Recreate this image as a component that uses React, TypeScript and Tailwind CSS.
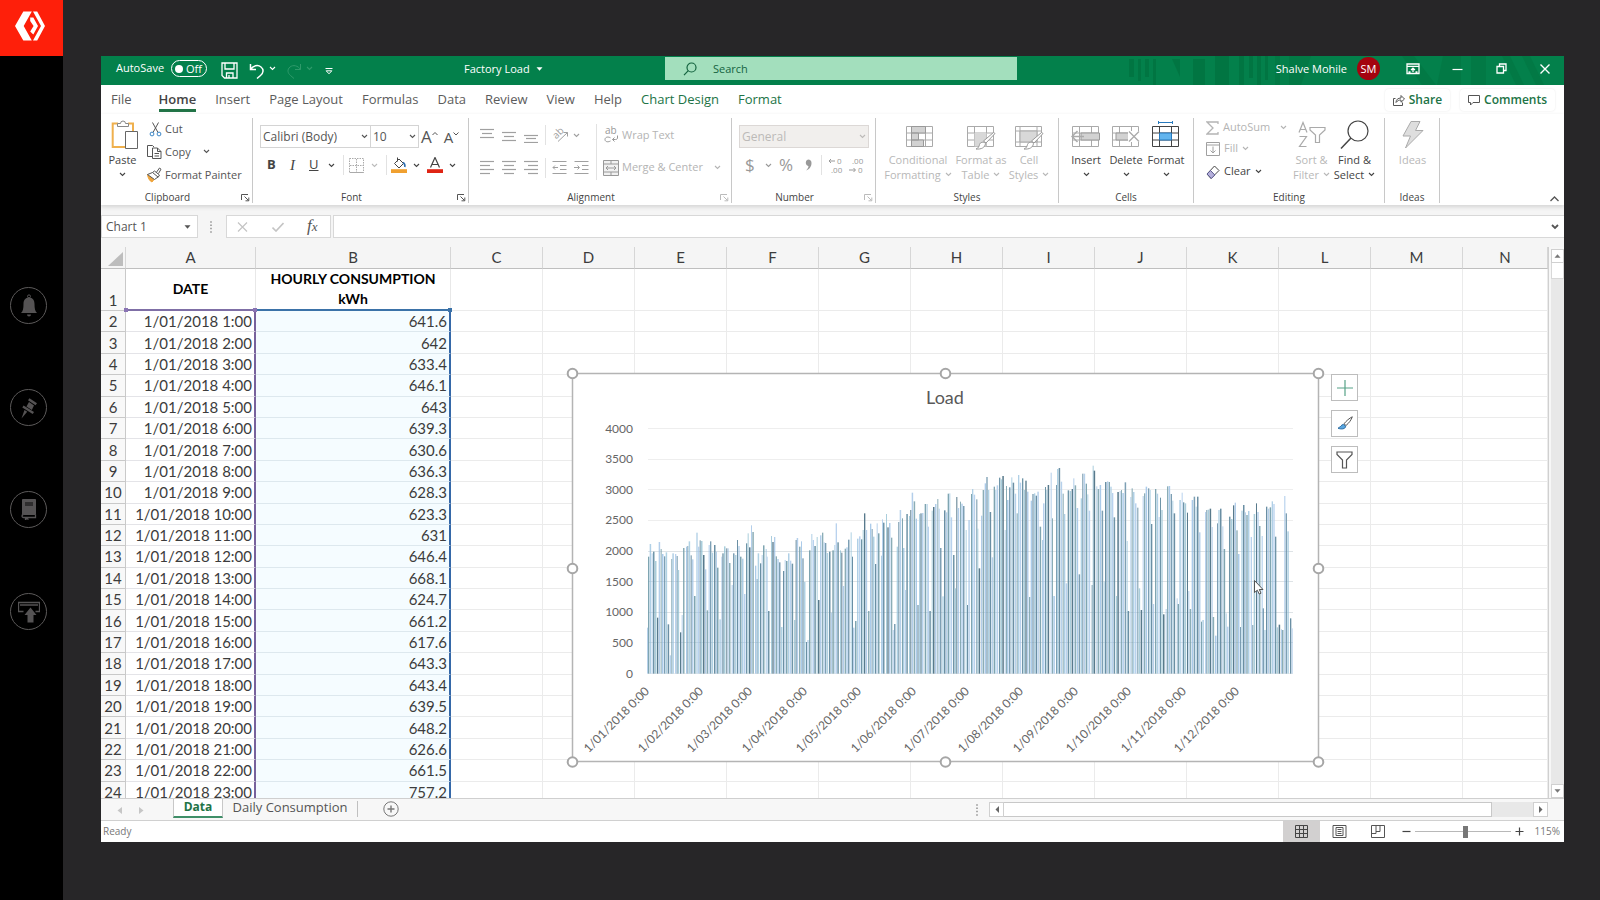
import type { ReactNode } from "react";
import clsx from "clsx";

/* ---------- small drawing helpers ---------- */

type IconProps = { w: number; h: number; children: ReactNode; className?: string };

function Icon({ w, h, children, className }: IconProps) {
  return (
    <svg
      width={w}
      height={h}
      viewBox={`0 0 ${w} ${h}`}
      fill="none"
      stroke="currentColor"
      strokeWidth="1"
      aria-hidden="true"
      className={clsx("block shrink-0", className)}
    >
      {children}
    </svg>
  );
}

function Chevron({ className }: { className?: string }) {
  return (
    <Icon w={7} h={5} className={className}>
      <path d="M1 1l2.500 2.500L6 1" strokeWidth="1.100" />
    </Icon>
  );
}

function Caret({ className }: { className?: string }) {
  return (
    <Icon w={7} h={4} className={className}>
      <path d="M0.500 0.300h6L3.500 3.700z" fill="currentColor" stroke="none" />
    </Icon>
  );
}

function Lines({ rows, className }: { rows: [number, number, number][]; className?: string }) {
  return (
    <Icon w={15} h={15} className={className}>
      {rows.map(([x, y, len]) => (
        <path key={y} d={`M${x} ${y}.5h${len}`} strokeWidth="1.200" />
      ))}
    </Icon>
  );
}

/* ---------- left rail ---------- */

function RailButton({ label, children }: { label: string; children: ReactNode }) {
  return (
    <button
      aria-label={label}
      className="flex size-[37px] items-center justify-center rounded-full border border-[#5c5a5a] text-[#555354]"
    >
      {children}
    </button>
  );
}

function Rail() {
  return (
    <nav className="flex w-[63px] shrink-0 flex-col bg-black">
      <a href="#home" aria-label="Home" className="flex h-14 items-center justify-center bg-[#fe1f0a] pr-1 pb-1 text-white">
        <Icon w={30} h={30}>
          <g fill="currentColor" stroke="none">
            <path d="M8.300 0.500h8.500L8.700 15l8.100 14.500H8.300L0 15z" />
            <path d="M18 0.500h4.200L30 15l-7.800 14.500H18L26 15z" />
            <path d="M15.200 6.500h3.100L23 15l-4.700 8.500L15.200 20.500l3.400-5.500-3.400-5z" />
          </g>
        </Icon>
      </a>
      <div className="flex flex-col gap-[65px] pt-[231px] pl-2.5">
        <RailButton label="Notifications">
          <Icon w={18} h={24}>
            <g fill="currentColor" stroke="none">
              <path d="M9 3.500c4 0 5.500 3 5.500 6.500 0 4.500.5 7 2.500 9H1c2-2 2.500-4.500 2.500-9C3.500 6.500 5 3.500 9 3.500z" />
              <path d="M7 20.500h4a2 2 0 0 1-4 0z" />
            </g>
            <circle cx="9" cy="2.400" r="1.500" />
          </Icon>
        </RailButton>
        <RailButton label="Pinned">
          <Icon w={18} h={22}>
            <g fill="currentColor" stroke="none">
              <path d="M9.500 1.200l7.500 5-1.500 2-7.500-5z" />
              <path d="M9 5l5 3.500-2.200 4.500-5.300-3.500z" />
              <path d="M3.500 8.500L14 15l-1.300 2L2.300 10.500z" />
              <path d="M4.500 13l2.700 1.800L1.500 21.500z" />
            </g>
          </Icon>
        </RailButton>
        <RailButton label="Library">
          <Icon w={16} h={21}>
            <path d="M1.500 0.500h13v15h-12a1 1 0 0 0-1 1z" fill="currentColor" />
            <path d="M4 4h8M4 6h8" stroke="black" strokeWidth="0.900" />
            <path d="M14.500 15.500v3h-12a1.500 1.500 0 0 1 0-3M4.500 18.500v2l1.500-1 1.500 1" strokeWidth="1.300" />
          </Icon>
        </RailButton>
        <RailButton label="Publish">
          <Icon w={22} h={22}>
            <path d="M5.500 10.500h-5v-9h21v9h-4M2 4h18" strokeWidth="1.300" />
            <path d="M12.500 6.500l6 7.500h-3v7.500h-6V14h-3z" fill="currentColor" stroke="none" />
          </Icon>
        </RailButton>
      </div>
    </nav>
  );
}

/* ---------- title bar ---------- */

function TitleBar() {
  return (
    <header className="flex h-[29px] items-center overflow-hidden bg-[#03804b] text-[11px] leading-4 text-white">
      <div className="flex w-[363px] shrink-0 items-center pb-1 pl-[15px]">
        <label htmlFor="autosave" className="w-[55px] pb-px">AutoSave</label>
        <span className="relative flex h-[17px] w-9 items-center justify-between rounded-full border border-white pr-1 pl-[3px]">
          <input id="autosave" type="checkbox" className="absolute inset-0 appearance-none" />
          <span className="size-2 rounded-full bg-white" />
          Off
        </span>
        <button aria-label="Save" className="ml-3.5 pt-1">
          <Icon w={17} h={17}>
            <path d="M1 1h15v15H3.500L1 13.500zM4 1v6h9V1M5.500 16v-5h6.500v5M8 13v3" strokeWidth="1.300" />
          </Icon>
        </button>
        <button aria-label="Undo" className="ml-[11px] pt-1">
          <Icon w={16} h={16}>
            <path d="M1.500 1v5.500H7M1.500 6.500C4 2.500 9 1.500 12 4s2.500 6-.5 8.500L8 15.500" strokeWidth="1.500" />
          </Icon>
        </button>
        <Chevron className="ml-1" />
        <button aria-label="Redo" disabled className="ml-2.5 pt-1 text-[#2f9a6b]">
          <Icon w={16} h={16}>
            <path d="M14.500 1v5.500H9M14.500 6.500C12 2.500 7 1.500 4 4s-2.500 6 .5 8.500L8 15.500" />
          </Icon>
        </button>
        <Chevron className="ml-1 text-[#2f9a6b]" />
        <button aria-label="Customize toolbar" className="ml-3 pt-1">
          <Icon w={8} h={8}>
            <path d="M0.500 1.500h7" />
            <path d="M1.200 3.800h5.600L4 6.800z" />
          </Icon>
        </button>
      </div>
      <button className="flex w-[201px] shrink-0 items-center gap-1.5 pb-1">
        Factory Load <Caret />
      </button>
      <div className="mb-1 flex h-[23px] w-[352px] shrink items-center gap-4 bg-[#a3dfbd] pl-[18px] text-[#14633f]">
        <Icon w={14} h={14}>
          <circle cx="8.500" cy="5.500" r="4.500" strokeWidth="1.200" />
          <path d="M5.300 8.700L1 13.200" strokeWidth="1.200" />
        </Icon>
        <input aria-label="Search" placeholder="Search" className="w-40 bg-transparent outline-none placeholder:text-[#14633f]" />
      </div>
      <div className="relative flex h-full flex-1 items-center justify-end pr-[13px] pb-1">
        <svg className="absolute inset-0 size-full text-[#02713f]" preserveAspectRatio="none" viewBox="0 0 547 29" fill="currentColor" aria-hidden="true">
          <path d="M112 3h5v18h-5zM121 3h3v22h-3zM128 3h4v18h-4zM136 3h3v26h-3zM155 3l8 0v18zM176 3h12v26h-12zM198 0h14v29h-14zM222 0h5v29h-5zM232 0h4v22h-4zM240 0h4v29h-4zM248 0h3v24h-3z" opacity="0.700" />
          <path d="M258 0h5v29h-5zM272 0h22l-10 29h-12zM385 0h12l22 29h-14zM426 0h18v29h-24zM454 0h15v29h-15zM485 0h8l14 29h-8zM505 0h8l14 29h-8z" opacity="0.450" />
        </svg>
        <span className="relative">Shalve Mohile</span>
        <span className="relative ml-2.5 flex size-[23px] items-center justify-center rounded-full bg-[#a4030f]">SM</span>
        <button aria-label="Ribbon display options" className="relative ml-[26px]">
          <Icon w={14} h={12}>
            <path d="M1 1h12v9.500H1zM1 3.300h12M7 9V5.500M5 7L7 5.200 9 7M2.500 9h2M9.500 9h2" strokeWidth="1.300" />
          </Icon>
        </button>
        <button aria-label="Minimize" className="relative ml-8">
          <Icon w={11} h={12}><path d="M0.500 6.500h10" strokeWidth="1.200" /></Icon>
        </button>
        <button aria-label="Restore" className="relative ml-[33px]">
          <Icon w={11} h={11}>
            <path d="M1 3.500h6.500V10H1z" strokeWidth="1.300" />
            <path d="M3.500 3V1H10v6.500H8" strokeWidth="1.300" />
          </Icon>
        </button>
        <button aria-label="Close" className="relative ml-8">
          <Icon w={12} h={12}><path d="M1.500 1.500l9 9M10.500 1.500l-9 9" strokeWidth="1.400" /></Icon>
        </button>
      </div>
    </header>
  );
}

/* ---------- ribbon tabs ---------- */

function RibbonTabs() {
  const tabs = ["File", "Home", "Insert", "Page Layout", "Formulas", "Data", "Review", "View", "Help", "Chart Design", "Format"];
  return (
    <div className="flex h-[29px] items-start bg-white text-[13px] leading-5 text-[#5c5c5c]">
      <nav className="flex flex-1 gap-[19px] pt-1 pl-2.5">
        {tabs.map((tab) => (
          <a
            key={tab}
            href="#ribbon"
            className={clsx(
              "h-[23px] whitespace-nowrap",
              tab === "File" && "mr-2",
              tab === "Home" && "border-b-[3px] border-[#217346] font-semibold text-[#444]",
              (tab === "Chart Design" || tab === "Format") && "text-[#217346]",
            )}
          >
            {tab}
          </a>
        ))}
      </nav>
      <div className="flex gap-2.5 pt-1 pr-[9px] text-[12px] text-[#217346]">
        <button className="flex h-[22px] items-center gap-1 rounded-sm px-2 font-semibold shadow-[0_0_2px_#e4e4e4]">
          <Icon w={12} h={12} className="text-[#555]">
            <path d="M2.500 4.500h-2v7h9v-3M3 8.500c0-3 2-4.500 5-4.500V1.500L11.500 5 8 8.200V6C6 6 4.500 6.500 3 8.500z" />
          </Icon>
          Share
        </button>
        <button className="flex h-[22px] items-center gap-1 rounded-sm px-2 font-semibold shadow-[0_0_2px_#e4e4e4]">
          <Icon w={12} h={11} className="text-[#555]"><path d="M0.500 0.500h11v7H5l-2.500 2.500V7.500h-2z" /></Icon>
          Comments
        </button>
      </div>
    </div>
  );
}

/* ---------- ribbon ---------- */

type GroupProps = { title: string; width: string; launcher?: "on" | "off"; children: ReactNode };

function Group({ title, width, launcher, children }: GroupProps) {
  return (
    <section className={clsx("relative flex h-[85px] shrink-0 flex-col border-r border-[#c8c8c8]", width)}>
      <div className="flex-1">{children}</div>
      <h2 className={clsx("text-center text-[10px] leading-3 text-[#444]", launcher && "pr-[18px]")}>{title}</h2>
      {launcher && (
        <button
          aria-label={`${title} settings`}
          className={clsx("absolute right-0.5 bottom-px", launcher === "on" ? "text-[#555]" : "text-[#bbb]")}
        >
          <Icon w={9} h={9}>
            <path d="M0.500 7V1.500H7M3.500 3.500l4 4M7.800 4.500v3.300H4.500" />
          </Icon>
        </button>
      )}
    </section>
  );
}

function BigButton({ icon, lines, width, tone }: { icon: ReactNode; lines: [string, string?]; width: string; tone?: "off" }) {
  return (
    <button
      className={clsx("flex shrink-0 flex-col items-center text-[11px] leading-[15px] whitespace-nowrap", width, tone ? "text-[#b8b8b8]" : "text-[#444]")}
    >
      <span className="flex h-[34px] items-center">{icon}</span>
      <span>{lines[0]}</span>
      <span className="flex h-[15px] items-center gap-1">
        {lines[1]}
        {lines[0] !== "Ideas" && <Chevron />}
      </span>
    </button>
  );
}

function SheetIcon({ children, className }: { children?: ReactNode; className?: string }) {
  return (
    <Icon w={30} h={29} className={className}>
      <path d="M1.500 5.500h26v20h-26zM1.500 12h26M1.500 19h26M8.500 5.500v20M20.500 5.500v20" />
      {children}
    </Icon>
  );
}

const brush = (
  <>
    <path d="M29 12.500L20 22l-2.500-2L27.500 11.500z" fill="white" stroke="#999" />
    <path d="M19.500 22.500c-.5 4-4 6-9.500 5.500 2.500-1 3-2.500 3.500-4.500s4-3.500 6-1z" fill="white" stroke="#999" />
  </>
);

function ClipboardGroup() {
  return (
    <Group title="Clipboard" width="w-[152px]" launcher="on">
      <div className="flex">
        <BigButton
          width="w-[43px]"
          lines={["Paste"]}
          icon={
            <Icon w={28} h={30} className="ml-1">
              <path d="M7 3.500H1.700V27H14" stroke="#efb04d" strokeWidth="2" />
              <path d="M17 3.500h5v8" stroke="#efb04d" strokeWidth="2" />
              <path d="M6.500 6.500v-3h3a2.500 2.500 0 0 1 5 0h3v3z" fill="white" stroke="#888" />
              <path d="M14.500 11.500h12v17h-12z" fill="white" stroke="#666" />
            </Icon>
          }
        />
        <div className="flex flex-col text-[11px] leading-[22px] text-[#555]">
          <button className="flex h-[22px] items-center pl-1">
            <Icon w={17} h={15}>
              <path d="M4.500 0.500l5.500 10M10.500 0.500L5 10.500" stroke="#555" />
              <circle cx="4" cy="12" r="1.900" stroke="#3c86c6" />
              <circle cx="11" cy="12" r="1.900" stroke="#3c86c6" />
            </Icon>
            Cut
          </button>
          <button className="flex h-[23px] items-center gap-0.5 pl-0.5">
            <Icon w={17} h={16}>
              <path d="M7 12.500H1.500v-11h5l1.500 1.500M6.500 4h5l3.500 3.500v7H6.500zM11.500 4v3.500H15M8.500 9.500h4.500M8.500 12h4.500" fill="none" />
            </Icon>
            <span className="w-9 text-left">Copy</span>
            <Chevron />
          </button>
          <button className="flex h-[23px] items-center gap-0.5 pl-0.5 whitespace-nowrap">
            <Icon w={17} h={16}>
              <path d="M1.500 7.500L8 12.500 6 15C3.500 14 2 11 1.500 7.500z" fill="#efa43a" stroke="#efa43a" />
              <path d="M6.500 5.500l2-1.500 5 4-1.500 2.500-5-1.500zM10.500 5.200l3-4.200 1.500 1.200-2.500 4.300" fill="white" />
              <path d="M1.500 7.500l5-2 5.500 4.500-3.500 2.500z" fill="#fff" />
            </Icon>
            Format Painter
          </button>
        </div>
      </div>
    </Group>
  );
}

function Divider({ className }: { className?: string }) {
  return <span className={clsx("w-px bg-[#e2e2e2]", className)} />;
}

function FontGroup() {
  return (
    <Group title="Font" width="w-[216px]" launcher="on">
      <div className="flex items-center pt-[7px] pl-[7px]">
        <button aria-label="Font name" className="flex h-[23px] w-[111px] items-center justify-between border border-[#d4d4d4] px-0.5 text-[12px] text-[#555]">
          Calibri (Body) <Chevron />
        </button>
        <button aria-label="Font size" className="flex h-[23px] w-12 items-center justify-between border border-l-0 border-[#d4d4d4] px-0.5 text-[12px] text-[#555]">
          10 <Chevron />
        </button>
        <button aria-label="Increase font size" className="ml-0.5 flex text-[17px] leading-5 text-[#555]">
          A<Icon w={6} h={5} className="mt-1"><path d="M0.500 4L3 1.500 5.500 4" /></Icon>
        </button>
        <button aria-label="Decrease font size" className="ml-1.5 flex text-[15px] leading-5 text-[#555]">
          A<Icon w={6} h={5} className="mt-1"><path d="M0.500 1.500L3 4l2.500-2.500" /></Icon>
        </button>
      </div>
      <div className="flex h-[34px] items-center pl-3.5 text-[13px] text-[#444]">
        <button className="w-[23px] text-left font-bold">B</button>
        <button className="w-[19px] text-left font-['Liberation_Serif',serif] text-[15px] italic">I</button>
        <button className="w-[19px] text-left underline">U</button>
        <Chevron />
        <Divider className="ml-2 h-5" />
        <button aria-label="Borders" className="ml-[5px] text-[#aaa]">
          <Icon w={15} h={15}>
            <path d="M0.500 0.500h14v14H0.500zM7.500 1v13M1 7.500h13" strokeDasharray="1.500 1" />
            <path d="M0.500 14.500h14" />
          </Icon>
        </button>
        <Chevron className="ml-[7px] text-[#bbb]" />
        <Divider className="ml-2 h-5" />
        <button aria-label="Fill color" className="ml-1">
          <Icon w={16} h={16}>
            <path d="M3.500 6.500L8 2l4.500 4.500L8 11zM6.500 0.500v4" />
            <path d="M12 5.500c1.800 1 2.200 2.500 1.800 4.500" stroke="#2f6fb0" strokeWidth="1.600" />
            <path d="M0 12.200h16V16H0z" fill="#f0a030" stroke="none" />
          </Icon>
        </button>
        <Chevron className="ml-1.5" />
        <button aria-label="Font color" className="ml-[7px]">
          <Icon w={16} h={16}>
            <path d="M3.500 10.500L8 0.500l4.500 10M5 7.500h6" strokeWidth="1.200" />
            <path d="M0 12.200h16V16H0z" fill="#df2414" stroke="none" />
          </Icon>
        </button>
        <Chevron className="ml-1.5" />
      </div>
    </Group>
  );
}

function AlignmentGroup() {
  return (
    <Group title="Alignment" width="w-[263px]" launcher="off">
      <div className="flex text-[11px] text-[#b4b4b4]">
        <div className="flex flex-col pl-[11px]">
          <div className="flex h-[34px] items-center gap-[7px] text-[#a0a0a0]">
            <Lines rows={[[0, 1, 14], [2, 5, 10], [0, 9, 14]]} />
            <Lines rows={[[0, 4, 14], [2, 8, 10], [0, 12, 14]]} />
            <Lines rows={[[0, 7, 14], [2, 10, 10], [0, 14, 14]]} />
            <Divider className="-mx-px h-5" />
            <Icon w={17} h={16}>
              <path d="M6 14.500L15.500 5.500M11.500 5.500h4v4" />
              <text x="2" y="11" transform="rotate(-45 5 9)" fontSize="10" fill="currentColor" stroke="none">ab</text>
            </Icon>
            <Chevron className="-ml-[3px]" />
          </div>
          <div className="flex h-[31px] items-center gap-[7px] text-[#a0a0a0]">
            <Lines rows={[[0, 1, 14], [0, 5, 10], [0, 9, 14], [0, 13, 10]]} />
            <Lines rows={[[0, 1, 14], [2, 5, 10], [0, 9, 14], [2, 13, 10]]} />
            <Lines rows={[[0, 1, 14], [4, 5, 10], [0, 9, 14], [4, 13, 10]]} />
            <Divider className="-mx-px h-5" />
            <Icon w={15} h={15}><path d="M0.500 1.500h14M8 5.500h6.500M8 9.500h6.500M0.500 13.500h14M6 7.500H1M3 5.500l-2 2 2 2" /></Icon>
            <Icon w={15} h={15}><path d="M0.500 1.500h14M8 5.500h6.500M8 9.500h6.500M0.500 13.500h14M0 7.500h5M3.500 5.500l2 2-2 2" /></Icon>
          </div>
        </div>
        <Divider className="mt-1.5 ml-[7px] h-14" />
        <div className="flex flex-col pl-1.5 whitespace-nowrap">
          <button className="flex h-[34px] items-center gap-[3px] pl-px">
            <Icon w={15} h={18} className="text-[#999]">
              <text x="1" y="8" fontSize="10" fill="currentColor" stroke="none">ab</text>
              <path d="M6.500 11.800c-3.500-1.800-5.500 0-5.500 1.700s2 3.300 5.500 1.500M13.500 9.500V12c0 1-1 1.500-2 1.500H8.500M10.500 11.500l-2 2 2 2" />
            </Icon>
            Wrap Text
          </button>
          <button className="flex h-[31px] items-center gap-[3px]">
            <Icon w={16} h={16} className="text-[#999]">
              <path d="M0.500 0.500h15v15H0.500zM0.500 4h15M0.500 12h15M8 0.500V4M8 12v3.500" fill="#f1f1f1" />
              <path d="M3 8h10M5 6L3 8l2 2M11 6l2 2-2 2" />
            </Icon>
            <span className="w-[89px] text-left">Merge &amp; Center</span>
            <Chevron />
          </button>
        </div>
      </div>
    </Group>
  );
}

function NumberGroup() {
  return (
    <Group title="Number" width="w-36" launcher="off">
      <div className="pt-[7px] pl-[7px]">
        <button className="flex h-[23px] w-[130px] items-center justify-between border border-[#dcd8d6] bg-[#f1efed] px-0.5 text-[12px] text-[#bcbab8]">
          General <Chevron />
        </button>
      </div>
      <div className="flex h-[34px] items-center pl-[13px] text-[17px] text-[#999]">
        <button className="w-5 text-left">$</button>
        <Chevron />
        <button className="ml-[7px] w-[25px] text-left">%</button>
        <button aria-label="Comma style">
          <Icon w={8} h={12}>
            <path d="M4 0.500a3.500 3.500 0 0 1 3.500 3.500c0 4-2.500 6.500-5.500 7.500 1.500-1.500 2.500-3 2.500-4.300A3.500 3.500 0 0 1 4 .5z" fill="currentColor" stroke="none" />
          </Icon>
        </button>
        <Divider className="ml-[9px] h-5" />
        <button aria-label="Increase decimal" className="ml-1.5">
          <Icon w={15} h={20}>
            <path d="M7 6H1M3 4L1 6l2 2" />
            <text x="9" y="9" fontSize="8" fill="currentColor" stroke="none">0</text>
            <text x="3" y="18" fontSize="8" fill="currentColor" stroke="none">.00</text>
          </Icon>
        </button>
        <button aria-label="Decrease decimal" className="ml-1.5">
          <Icon w={15} h={20}>
            <path d="M0 15h6M4.500 13l2 2-2 2" />
            <text x="3" y="9" fontSize="8" fill="currentColor" stroke="none">.00</text>
            <text x="9" y="18" fontSize="8" fill="currentColor" stroke="none">0</text>
          </Icon>
        </button>
      </div>
    </Group>
  );
}

function StylesGroup() {
  return (
    <Group title="Styles" width="w-[183px]">
      <div className="flex pl-[7px] text-[#999]">
        <BigButton tone="off" width="w-[70px]" lines={["Conditional", "Formatting"]} icon={
          <SheetIcon className="ml-1 text-[#aaa]">
            <path d="M6.500 5.500h14V12h-14zM6.500 12h7v7h-7zM6.500 19h12v6.500h-12z" fill="#d2d2d2" stroke="#999" />
          </SheetIcon>} />
        <BigButton tone="off" width="w-[56px]" lines={["Format as", "Table"]} icon={
          <SheetIcon className="text-[#aaa]">
            <path d="M8.500 12h12v13.500h-12z" fill="#d8d8d8" stroke="none" />
            {brush}
          </SheetIcon>} />
        <BigButton tone="off" width="w-[40px]" lines={["Cell", "Styles"]} icon={
          <Icon w={30} h={29} className="text-[#aaa]">
            <path d="M1.500 5.500h26v20h-26zM1.500 10h26M6 5.500v20M23 5.500v20M1.500 21h26" />
            <path d="M6 10h17v11H6z" fill="#d8d8d8" />
            {brush}
          </Icon>} />
      </div>
    </Group>
  );
}

function CellsGroup() {
  return (
    <Group title="Cells" width="w-[135px]">
      <div className="flex pl-[7px]">
        <BigButton width="w-10" lines={["Insert"]} icon={
          <SheetIcon className="text-[#aaa]">
            <path d="M10 12h18.500v7H10z" fill="#d2d2d2" stroke="#999" />
            <path d="M13 15.500H1M6.500 10L1 15.500 6.500 21" strokeWidth="1.500" />
          </SheetIcon>} />
        <BigButton width="w-10" lines={["Delete"]} icon={
          <SheetIcon className="text-[#aaa]">
            <path d="M5 12h15v7H5z" fill="#d2d2d2" stroke="#999" />
            <path d="M17 10h12v11H17z" fill="white" stroke="none" />
            <path d="M18 10.500l10 10M28 10.500l-10 10" strokeWidth="1.300" />
          </SheetIcon>} />
        <BigButton width="w-10" lines={["Format"]} icon={
          <SheetIcon className="text-[#444]">
            <path d="M8.500 12h12v7h-12z" fill="#63b5ee" stroke="#2779bd" />
            <path d="M7.500 1.500h14M7.500 0v3M21.500 0v3" stroke="#2779bd" />
          </SheetIcon>} />
      </div>
    </Group>
  );
}

function EditingGroup() {
  return (
    <Group title="Editing" width="w-[191px]">
      <div className="flex">
        <div className="flex w-24 flex-col pl-3 text-[11px] whitespace-nowrap text-[#b4b4b4]">
          <button className="flex h-[19px] items-center gap-1">
            <Icon w={13} h={14}><path d="M12 3V1H1l6 6-6 6h11v-2" strokeWidth="1.300" /></Icon>
            <span className="w-[53px] text-left">AutoSum</span>
            <Chevron />
          </button>
          <button className="flex h-[23px] items-center gap-1">
            <Icon w={14} h={14} className="text-[#a0a0a0]"><path d="M0.500 0.500h13v13H0.500zM0.500 3h13M7 4.500V11M4.500 8.500L7 11l2.500-2.500" /></Icon>
            Fill <Chevron />
          </button>
          <button className="flex h-[23px] items-center gap-1 text-[#444]">
            <Icon w={14} h={14}>
              <path d="M8.500 1l4.500 4.500-8 8-4-4.500z" />
              <path d="M4.500 5.500L8.800 10l-3.500 3.500L1 9z" fill="#b6b0dc" stroke="#5b5b8c" />
            </Icon>
            Clear <Chevron />
          </button>
        </div>
        <BigButton tone="off" width="w-[43px]" lines={["Sort &", "Filter"]} icon={
          <Icon w={28} h={28} className="text-[#aaa]">
            <path d="M1 11.500L5 1.500l4 10M2.300 8.500h5.400M1.500 15.500h7l-7 10h7" strokeWidth="1.200" />
            <path d="M12 6.500h15v2.500l-5.500 5v7.500h-4V14L12 9z" strokeWidth="1.200" />
          </Icon>} />
        <BigButton width="w-[43px]" lines={["Find &", "Select"]} icon={
          <Icon w={30} h={30}>
            <circle cx="18" cy="11" r="10" strokeWidth="1.200" />
            <path d="M11 18L1 28.500" strokeWidth="1.500" />
          </Icon>} />
      </div>
    </Group>
  );
}

function Ribbon() {
  return (
    <div className="relative z-10 flex h-[91px] items-start bg-white pt-1 shadow-[0_2px_4px_#d4d4d4]">
      <ClipboardGroup />
      <FontGroup />
      <AlignmentGroup />
      <NumberGroup />
      <StylesGroup />
      <CellsGroup />
      <EditingGroup />
      <Group title="Ideas" width="w-[55px]">
        <BigButton tone="off" width="w-[55px]" lines={["Ideas"]} icon={
          <Icon w={22} h={28} className="text-[#aaa]">
            <path d="M9 0.500h9l-4.500 9H21L3.500 27l5-12H1z" fill="#dedede" />
          </Icon>} />
      </Group>
      <button aria-label="Collapse ribbon" className="mt-[78px] mr-[5px] ml-auto text-[#555]">
        <Icon w={9} h={6}><path d="M0.500 5L4.500 1l4 4" strokeWidth="1.300" /></Icon>
      </button>
    </div>
  );
}

/* ---------- formula bar ---------- */

function Dots({ className }: { className?: string }) {
  return (
    <Icon w={2} h={12} className={className}>
      <path d="M0 1h2M0 4.300h2M0 7.600h2M0 11h2" strokeWidth="1.500" />
    </Icon>
  );
}

function FormulaBar() {
  return (
    <div className="flex h-[42px] items-start bg-[#f5f5f5] pt-2.5 text-[#555]">
      <button className="flex h-[23px] w-[97px] shrink-0 items-center justify-between border border-[#d8d8d8] bg-white pr-1.5 pl-1 text-[12px]">
        Chart 1 <Caret />
      </button>
      <Dots className="mt-1.5 ml-3 text-[#aaa]" />
      <div className="ml-3.5 flex h-[23px] w-[105px] shrink-0 items-center border border-[#d8d8d8] bg-white pl-2.5">
        <button aria-label="Cancel" className="text-[#c4c4c4]">
          <Icon w={11} h={10}><path d="M1 0.500l9 9M10 0.500l-9 9" strokeWidth="1.200" /></Icon>
        </button>
        <button aria-label="Enter" className="ml-6 text-[#c4c4c4]">
          <Icon w={12} h={10}><path d="M0.500 5.500L4 9l7.500-8" strokeWidth="1.600" /></Icon>
        </button>
        <button aria-label="Insert function" className="ml-[23px] font-['Liberation_Serif',serif] text-[17px] leading-5 italic">
          f<span className="text-[13px]">x</span>
        </button>
      </div>
      <div className="ml-0.5 flex h-[23px] flex-1 items-center border border-r-0 border-[#d8d8d8] bg-white pr-[5px]">
        <input aria-label="Formula" className="h-full flex-1 outline-none" />
        <Icon w={8} h={6}><path d="M1 1l3 3 3-3" strokeWidth="1.800" /></Icon>
      </div>
    </div>
  );
}

/* ---------- worksheet ---------- */

const columns = ["A", "B", "C", "D", "E", "F", "G", "H", "I", "J", "K", "L", "M", "N"];
const emptyColumns = columns.slice(2);

const consumption = [
  "641.6", "642", "633.4", "646.1", "643", "639.3", "630.6", "636.3", "628.3", "623.3", "631", "646.4",
  "668.1", "624.7", "661.2", "617.6", "643.3", "643.4", "639.5", "648.2", "626.6", "661.5", "757.2",
];

function Handle({ className }: { className: string }) {
  return <span className={clsx("absolute size-1", className)} />;
}

function Grid() {
  const head = "border-r border-b border-[#d6d6d6] border-b-[#bfbfbf] p-0 pb-px font-normal";
  const rowHead = "border-r border-b border-[#c9c9c9] bg-[#f8f8f8] p-0 font-normal";
  const cell = "border-r border-b border-[#ebebeb] p-0";
  return (
    <table className="h-[556px] w-full table-fixed border-separate border-spacing-0 font-['Lato','Liberation_Sans',sans-serif] text-[15px] leading-4 text-[#3c3c3c]">
      <colgroup>
        <col className="w-[25px]" />
        <col className="w-[130px]" />
        <col className="w-[195px]" />
        {emptyColumns.map((c) => (
          <col key={c} className={c === "N" ? "" : "w-[92px]"} />
        ))}
      </colgroup>
      <thead>
        <tr className="h-[22px] bg-[#f5f5f5]">
          <th aria-label="Select all" className={head}>
            <Icon w={16} h={15} className="mt-1 ml-[7px] text-[#bdbdbd]">
              <path d="M15 0v14H0z" fill="currentColor" stroke="none" />
            </Icon>
          </th>
          {columns.map((c) => (
            <th key={c} scope="col" className={head}>{c}</th>
          ))}
        </tr>
      </thead>
      <tbody>
        <tr className="h-10">
          <th scope="row" className={clsx(rowHead, "pb-0.5 align-bottom")}>1</th>
          <td className="relative border-r border-b-2 border-[#e8e8e8] border-b-[#7f6fa6] p-0 text-center text-[14px] font-bold text-black">
            DATE
            <Handle className="-right-0.5 -bottom-[3px] z-10 bg-[#8a74b4]" />
            <Handle className="-bottom-[3px] -left-0.5 bg-[#8a74b4]" />
          </td>
          <td className="relative border-r border-b-2 border-[#e8e8e8] border-b-[#3b72a8] p-0 text-center text-[14px] leading-5 font-bold text-black">
            HOURLY CONSUMPTION kWh
            <Handle className="-right-0.5 -bottom-[3px] bg-[#3b72a8]" />
          </td>
          {emptyColumns.map((c) => <td key={c} className={cell} />)}
        </tr>
        {consumption.map((value, i) => (
          <tr key={i}>
            <th scope="row" className={rowHead}>{i + 2}</th>
            <td className="border-r-2 border-b border-[#e4e4e8] border-r-[#77629c] p-0 pr-0.5 text-right whitespace-nowrap">
              {`1/01/2018 ${i + 1}:00`}
            </td>
            <td className="border-r-2 border-b border-[#dde8ee] border-r-[#3568a8] bg-[#f5fcff] p-0 pr-0.5 text-right">{value}</td>
            {emptyColumns.map((c) => <td key={c} className={cell} />)}
          </tr>
        ))}
      </tbody>
    </table>
  );
}

/* Daily load profile as pairs of plot x position and bar top, three plot units to a pixel. */
const load: number[] = [
  263,803,266,590,271,552,277,580,281,575,287,603,293,773,298,546,304,567,308,582,314,589,319,577,325,793,331,886,336,597,339,580,
  347,582,352,588,355,630,362,817,367,765,371,564,380,560,384,558,388,544,394,586,398,598,404,708,411,518,416,560,421,541,425,543,
  431,585,437,628,442,751,448,555,452,544,457,578,464,555,470,575,473,623,480,778,486,590,489,580,494,559,501,565,505,565,509,609,
  517,675,521,580,527,585,533,540,537,558,542,590,548,596,554,702,560,550,565,520,569,562,575,496,579,516,587,617,592,657,595,580,
  602,610,607,585,611,556,619,567,622,590,626,753,635,528,639,546,644,531,649,589,654,597,659,607,665,801,671,633,676,600,680,603,
  686,580,692,602,697,611,704,780,709,540,712,534,719,560,725,544,729,595,734,666,740,846,744,840,749,571,756,522,760,540,765,558,
  772,531,776,720,782,526,788,518,793,547,797,549,802,579,809,575,815,758,819,571,825,555,829,490,834,547,842,571,846,578,850,678,
  856,566,861,562,866,539,874,517,878,590,881,803,887,783,893,536,899,529,905,538,910,510,914,460,919,510,926,753,932,491,937,507,
  941,530,947,612,952,490,956,520,965,587,968,478,971,488,980,462,984,502,989,489,995,533,1000,810,1004,792,1012,560,1017,486,
  1021,450,1028,475,1031,564,1037,690,1041,462,1049,468,1053,450,1057,398,1063,424,1069,476,1074,735,1079,462,1083,460,1088,459,
  1096,432,1102,432,1105,500,1110,753,1117,452,1121,441,1127,432,1134,417,1138,446,1142,564,1149,709,1154,451,1160,457,1165,401,
  1170,400,1174,472,1181,585,1187,685,1191,411,1195,444,1202,425,1206,431,1211,438,1219,510,1223,735,1227,480,1235,402,1238,387,
  1243,404,1251,418,1254,506,1258,625,1265,467,1270,390,1276,370,1281,351,1286,390,1291,456,1297,592,1303,380,1308,390,1312,376,
  1319,353,1324,358,1329,348,1336,510,1340,378,1343,420,1349,382,1356,352,1360,368,1366,401,1372,460,1376,345,1381,368,1388,355,
  1393,390,1398,362,1403,395,1409,711,1414,422,1419,402,1424,400,1429,407,1434,395,1441,500,1448,540,1451,430,1457,381,1461,390,
  1465,375,1474,338,1478,475,1482,708,1490,375,1493,327,1498,324,1504,365,1510,401,1514,462,1519,670,1525,391,1531,393,1537,387,
  1542,355,1546,376,1552,444,1558,643,1564,415,1569,341,1573,341,1579,371,1584,403,1588,452,1597,675,1600,317,1603,332,1611,379,
  1615,387,1621,375,1627,452,1633,665,1637,366,1643,364,1648,366,1653,380,1658,399,1663,472,1670,708,1674,396,1681,393,1685,390,
  1689,399,1696,367,1702,543,1705,753,1713,411,1717,385,1721,396,1727,430,1734,443,1738,685,1744,750,1750,408,1754,400,1759,380,
  1766,385,1771,390,1775,492,1780,732,1787,387,1792,401,1798,471,1802,413,1806,450,1811,763,1819,747,1823,379,1828,378,1834,402,
  1839,422,1843,460,1852,715,1855,732,1860,420,1867,398,1871,427,1876,430,1883,458,1887,693,1891,747,1897,420,1903,410,1909,440,
  1913,410,1919,517,1925,785,1929,780,1937,456,1941,450,1945,449,1951,446,1957,501,1960,771,1967,827,1973,490,1977,450,1982,446,
  1989,499,1993,567,1999,760,2003,800,2009,470,2015,477,2021,436,2026,428,2031,511,2036,582,2042,801,2046,452,2051,435,2057,457,
  2061,465,2066,453,2074,531,2079,795,2083,462,2090,430,2094,456,2099,498,2107,528,2110,745,2115,810,2120,440,2125,446,2131,442,
  2137,424,2142,432,2147,530,2152,802,2158,794,2165,808,2168,810,2175,408,2179,460,2184,514,2192,775,2197,805,
];

const barTones = ["#b7d1eb", "#7fa5b1", "#b0d0e6", "#b9d2ee", "#6f95a8", "#aacedc", "#587a8c", "#b3ceea", "#8badb6", "#abcbea", "#7d9fb4", "#b0d2e4", "#6a8fa4"];

function LoadChart() {
  const bars: { x: number; top: number; tone: string }[] = [];
  for (let i = 0; i < load.length; i += 2) {
    bars.push({ x: load[i], top: load[i + 1], tone: barTones[(i / 2) % barTones.length] });
  }
  const ticks = [4000, 3500, 3000, 2500, 2000, 1500, 1000, 500, 0];
  const months = [650, 704, 753, 808, 862, 917, 970, 1024, 1079, 1132, 1187, 1240];
  return (
    <svg
      width="760"
      height="404"
      viewBox="565 366 760 404"
      role="img"
      aria-label="Load"
      className="block shrink-0 font-['Lato','Liberation_Sans',sans-serif] text-[12px]"
    >
      <path d="M572.500 373.500h746v388h-746z" fill="white" stroke="#b4b4b4" strokeWidth="1.500" />
      <text x="945" y="404" textAnchor="middle" fontSize="18" fill="#595959">Load</text>
      {ticks.map((t) => {
        const y = 673.5 - (t / 4000) * 245;
        return (
          <g key={t}>
            <path d={`M648 ${Math.floor(y)}.5h645`} stroke="#eeeeee" />
            <text x="633" y={y + 4} textAnchor="end" fill="#666">{t}</text>
          </g>
        );
      })}
      <g transform="translate(560 360) scale(0.33333)">
        {bars.map((b, i) => (
          <rect
            key={b.x}
            x={b.x - 2}
            y={b.top}
            width={Math.max(3, Math.min(4.5, (bars[i + 1]?.x ?? b.x + 4) - b.x - 1))}
            height={941 - b.top}
            fill={b.tone}
          />
        ))}
      </g>
      <g stroke="#5b87a8" strokeOpacity="0.100">
        <path d="M648 642.500h645M648 612.500h645M648 581.500h645M648 551.500h645" />
      </g>
      {months.map((x, i) => (
        <text key={x} x={x} y="692" textAnchor="end" transform={`rotate(-45 ${x} 692)`} fill="#666">
          {`1/${String(i + 1).padStart(2, "0")}/2018 0:00`}
        </text>
      ))}
      <g fill="white" stroke="#a6a6a6" strokeWidth="2">
        {[572.5, 945.5, 1318.5].flatMap((x) =>
          [373.5, 568.5, 762].map((y) => (x === 945.5 && y === 568.5 ? null : <circle key={`${x}-${y}`} cx={x} cy={y} r="4.800" />)),
        )}
      </g>
      <path d="M1254.500 580.500v12l2.800-2.300 1.900 3.800 1.800-.8-1.700-3.700h3.700z" fill="white" stroke="#444" strokeWidth="0.900" />
    </svg>
  );
}

function ChartButton({ label, children }: { label: string; children: ReactNode }) {
  return (
    <button aria-label={label} className="flex size-[27px] items-center justify-center border border-[#bdbdbd] bg-white text-[#555]">
      {children}
    </button>
  );
}

function Sheet() {
  return (
    <div className="flex h-[551px] overflow-hidden bg-[#f7f7f7]">
      <div className="relative min-w-0 flex-1 overflow-hidden bg-white">
        <Grid />
        <div className="absolute top-[119px] left-[464px] flex items-start">
          <LoadChart />
          <div className="flex flex-col gap-[9px] pt-2 pl-1.5">
            <ChartButton label="Chart elements">
              <Icon w={16} h={16} className="text-[#57a287]"><path d="M8 0v16M0 8h16" strokeWidth="1.200" /></Icon>
            </ChartButton>
            <ChartButton label="Chart styles">
              <Icon w={16} h={15}>
                <path d="M15.300 0.800c-3 1.500-6 4-8.300 7l2 1.700c3-2.500 5.200-5.500 6.300-8.700z" />
                <path d="M6.500 8.500c-2.500 0-2.500 2.500-5.500 3.700 3 1.300 7.500 1 7.700-2z" fill="#5aa7e0" stroke="#2c6da4" />
              </Icon>
            </ChartButton>
            <ChartButton label="Chart filters">
              <Icon w={17} h={18}><path d="M1 1h15v2.500l-5.500 5.500v8h-4V9L1 3.500z" strokeWidth="1.200" /></Icon>
            </ChartButton>
          </div>
        </div>
      </div>
      <div className="flex w-4 shrink-0 flex-col border-l border-[#d0d0d0] pt-0.5 pl-0.5">
        <button aria-label="Scroll up" className="flex h-3.5 items-center justify-center border border-[#d0d0d0] bg-white text-[#777]">
          <Caret className="rotate-180" />
        </button>
        <span className="h-4 border border-t-0 border-[#d8d8d8] bg-white" />
        <span className="flex-1 bg-[#e8e8e8]" />
        <button aria-label="Scroll down" className="flex h-3.5 items-center justify-center border border-[#d0d0d0] bg-white text-[#777]">
          <Caret />
        </button>
      </div>
    </div>
  );
}

/* ---------- footer ---------- */

function SheetTabs() {
  return (
    <div className="flex h-[22px] items-start border-t border-[#cfcfcf] bg-[#f7f7f7] text-[13px] leading-4 text-[#555]">
      <div className="flex w-[72px] gap-[17px] pt-2 pl-4 text-[#c6c6c6]">
        <Icon w={5} h={7}><path d="M5 0v7L0.500 3.500z" fill="currentColor" stroke="none" /></Icon>
        <Icon w={5} h={7}><path d="M0 0v7l4.500-3.500z" fill="currentColor" stroke="none" /></Icon>
      </div>
      <button className="h-[19px] w-[50px] border-r border-b-2 border-l border-[#c8c8c8] border-b-[#3f8f68] bg-white pb-0.5 text-[12px] font-bold text-[#217346]">Data</button>
      <button className="w-[134px] text-center whitespace-nowrap">Daily Consumption</button>
      <span className="mt-0.5 h-4 w-px bg-[#c0c0c0]" />
      <button aria-label="New sheet" className="mt-0.5 ml-[25px] text-[#777]">
        <Icon w={16} h={16}><circle cx="8" cy="8" r="7.200" /><path d="M8 4.500v7M4.500 8h7" strokeWidth="1.400" /></Icon>
      </button>
      <div className="mt-[3px] mr-4 ml-auto flex h-[15px] w-[572px] items-center">
        <Dots className="text-[#aaa]" />
        <button aria-label="Scroll left" className="ml-[11px] flex h-[15px] w-[15px] items-center justify-center border border-[#d0d0d0] bg-white text-[#666]">
          <Icon w={4} h={7}><path d="M4 0v7L0.500 3.500z" fill="currentColor" stroke="none" /></Icon>
        </button>
        <div className="flex h-[15px] flex-1 bg-[#e8e8e8]">
          <span className="w-[488px] border border-l-0 border-[#c8c8c8] bg-white" />
        </div>
        <button aria-label="Scroll right" className="flex h-[15px] w-[15px] items-center justify-center border border-[#d0d0d0] bg-white text-[#666]">
          <Icon w={4} h={7}><path d="M0 0v7l3.500-3.500z" fill="currentColor" stroke="none" /></Icon>
        </button>
      </div>
    </div>
  );
}

function StatusBar() {
  return (
    <footer className="flex h-[22px] items-center border-t border-[#d0d0d0] bg-white text-[10px] text-[#777]">
      <span className="flex-1 pl-0.5">Ready</span>
      <button aria-label="Normal view" className="flex h-full w-[37px] items-center justify-center bg-[#d2d0d0] text-[#444]">
        <Icon w={13} h={13}><path d="M0.500 0.500h12v12H0.500zM0.500 4.500h12M0.500 8.500h12M4.500 0.500v12M8.500 0.500v12" /></Icon>
      </button>
      <button aria-label="Page layout view" className="ml-3 text-[#555]">
        <Icon w={15} h={13}><path d="M1 0.500h13v12H1zM4 2.500h7v8H4zM5.500 4.500h4M5.500 6.500h4M5.500 8.500h4" /></Icon>
      </button>
      <button aria-label="Page break view" className="ml-6 text-[#555]">
        <Icon w={14} h={13}><path d="M0.500 0.500h13v12H0.500zM5 0.500v8H0.500M9 0.500v6H5" /></Icon>
      </button>
      <button aria-label="Zoom out" className="ml-[17px] text-[#444]">
        <Icon w={9} h={9}><path d="M0.500 4.500h8" strokeWidth="1.200" /></Icon>
      </button>
      <div className="ml-1 flex h-3.5 w-24 items-center">
        <input
          type="range"
          aria-label="Zoom"
          min={10}
          max={200}
          defaultValue={110}
          className="h-px w-full appearance-none bg-[#b8b8b8] [&::-webkit-slider-thumb]:h-3 [&::-webkit-slider-thumb]:w-[5px] [&::-webkit-slider-thumb]:appearance-none [&::-webkit-slider-thumb]:bg-[#777]"
        />
      </div>
      <button aria-label="Zoom in" className="ml-1 text-[#444]">
        <Icon w={9} h={9}><path d="M0.500 4.500h8M4.500 0.500v8" strokeWidth="1.200" /></Icon>
      </button>
      <span className="w-10 pr-1 text-right">115%</span>
    </footer>
  );
}

export default function App() {
  return (
    <div className="flex min-h-screen bg-[#272628] font-['Open_Sans','Noto_Sans',sans-serif]">
      <Rail />
      <main className="min-w-0 flex-1 pt-14 pr-9 pb-[58px] pl-[38px]">
        <div className="flex flex-col overflow-hidden bg-white">
          <TitleBar />
          <RibbonTabs />
          <Ribbon />
          <FormulaBar />
          <Sheet />
          <SheetTabs />
          <StatusBar />
        </div>
      </main>
    </div>
  );
}
